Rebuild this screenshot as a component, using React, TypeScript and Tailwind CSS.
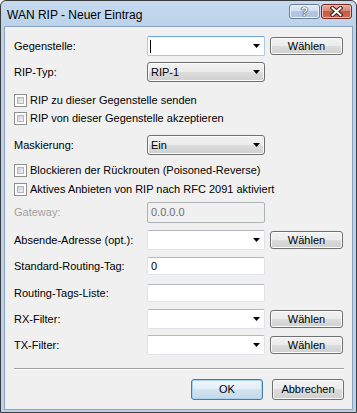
import React from "react";

const font = "font-['Liberation_Sans',Arial,sans-serif]";

function Arrow() {
  return (
    <svg width="7" height="4" viewBox="0 0 7 4" className="shrink-0">
      <polygon points="0,0 7,0 3.5,4" fill="#000" />
    </svg>
  );
}

function Label({ children, disabled }: { children: React.ReactNode; disabled?: boolean }) {
  return (
    <div className={`w-[133px] shrink-0 ${disabled ? "text-[#a0a0a0]" : "text-black"}`}>
      {children}
    </div>
  );
}

function Combo({ focused, caret }: { focused?: boolean; caret?: boolean }) {
  return (
    <div
      className={`w-[118px] h-[20px] flex items-center justify-between pl-[2px] pr-[4px] bg-white rounded-[2px] border ${
        focused
          ? "border-[#a9c9ec] border-t-[#6aa5e3]"
          : "border-[#e0e3e9] border-t-[#b4b7be]"
      }`}
    >
      <span className="w-px h-[13px] bg-black" style={{ opacity: caret ? 1 : 0 }} />
      <Arrow />
    </div>
  );
}

function Dropdown({ value }: { value: string }) {
  return (
    <div className="w-[118px] h-[20px] flex items-center justify-between pl-[3px] pr-[4px] rounded-[3px] border border-[#707070] bg-[linear-gradient(to_bottom,#f2f2f2_0%,#ebebeb_50%,#dddddd_50%,#cfcfcf_100%)] shadow-[inset_0_0_0_1px_#fbfbfb]">
      <span>{value}</span>
      <Arrow />
    </div>
  );
}

function TextBox({ value, h = "h-[18px]", disabled }: { value?: string; h?: string; disabled?: boolean }) {
  return (
    <div
      className={`w-[118px] ${h} flex items-center pl-[3px] rounded-[2px] border ${
        disabled
          ? "bg-[#f0f0f0] border-[#adb2b5] text-[#6d6d6d]"
          : "bg-white border-[#e0e3e9] border-t-[#b4b7be] text-black"
      }`}
    >
      {value}
    </div>
  );
}

function WinButton({ children, w = "w-[73px]", h = "h-[18px]", isDefault }: { children: React.ReactNode; w?: string; h?: string; isDefault?: boolean }) {
  return (
    <div
      className={`${w} ${h} flex items-center justify-center rounded-[3px] border ${
        isDefault
          ? "border-[#3c7fb1] bg-[linear-gradient(to_bottom,#eef5fa_0%,#e3eef6_50%,#d3e3ef_50%,#c6d9e8_100%)] shadow-[inset_0_0_0_1px_#a8d4f0]"
          : "border-[#707070] bg-[linear-gradient(to_bottom,#f2f2f2_0%,#ebebeb_50%,#dddddd_50%,#cfcfcf_100%)] shadow-[inset_0_0_0_1px_#fbfbfb]"
      }`}
    >
      {children}
    </div>
  );
}

function CheckRow({ label, mt }: { label: string; mt: string }) {
  return (
    <div className={`${mt} h-[16px] flex items-center gap-[3px]`}>
      <div className="w-[13px] h-[13px] border border-[#8e8f8f] bg-white p-[2px]">
        <div className="w-full h-full border border-[#b4b8bd] bg-[linear-gradient(135deg,#cbcfd5,#f4f4f4)]" />
      </div>
      <span>{label}</span>
    </div>
  );
}

export default function App() {
  return (
    <div className={`${font} text-[11px] leading-none w-[357px] h-[413px] flex flex-col border border-[#3c3c3c] rounded-t-[6px] bg-[linear-gradient(to_bottom,#c6daf0,#b9d1ea_30px,#b9d1ea)] overflow-hidden`}>
      {/* title bar */}
      <div className="h-[25px] shrink-0 flex items-start">
        <div className="pl-[6px] pt-[8px] text-[12px] text-black">WAN RIP - Neuer Eintrag</div>
        <div className="ml-auto mt-[3px] mr-[4px] flex gap-[1px]">
          <div className="w-[31px] h-[15px] rounded-[3px] border border-[#6b7f99] bg-[linear-gradient(to_bottom,#e3edf8_0%,#cddcee_50%,#b3c8e1_50%,#a9c1de_100%)] flex items-center justify-center shadow-[inset_0_0_0_1px_#eef4fb]">
            <span className="text-[12px] font-bold text-[#f4f7fb] [text-shadow:0_0_1px_#2d3f57,0_0_1px_#2d3f57,0_0_1px_#2d3f57]">?</span>
          </div>
          <div className="w-[31px] h-[15px] rounded-[3px] border border-[#7a2a20] bg-[linear-gradient(to_bottom,#e9a99c_0%,#d98471_50%,#c75a42_50%,#cd6a50_100%)] flex items-center justify-center shadow-[inset_0_0_0_1px_#eebcb0]">
            <svg width="13" height="11" viewBox="0 0 13 11">
              <path d="M2.5 2 L10.5 9 M10.5 2 L2.5 9" stroke="#3b1a14" strokeWidth="4" strokeLinecap="square" />
              <path d="M2.5 2 L10.5 9 M10.5 2 L2.5 9" stroke="#ffffff" strokeWidth="2" strokeLinecap="square" />
            </svg>
          </div>
        </div>
      </div>

      {/* content */}
      <div className="flex-1 mx-[3px] mb-[2px] border border-[#8aa3c0] bg-[#f0f0f0] pl-[9px] pr-[8px] flex flex-col">
        <div className="mt-[9px] h-[20px] flex items-center">
          <Label>Gegenstelle:</Label>
          <Combo focused caret />
          <div className="ml-[5px]"><WinButton>Wählen</WinButton></div>
        </div>
        <div className="mt-[6px] h-[20px] flex items-center">
          <Label>RIP-Typ:</Label>
          <Dropdown value="RIP-1" />
        </div>
        <CheckRow mt="mt-[10px]" label="RIP zu dieser Gegenstelle senden" />
        <CheckRow mt="mt-[2px]" label="RIP von dieser Gegenstelle akzeptieren" />
        <div className="mt-[9px] h-[20px] flex items-center">
          <Label>Maskierung:</Label>
          <Dropdown value="Ein" />
        </div>
        <CheckRow mt="mt-[7px]" label="Blockieren der Rückrouten (Poisoned-Reverse)" />
        <CheckRow mt="mt-[3px]" label="Aktives Anbieten von RIP nach RFC 2091 aktiviert" />
        <div className="mt-[5px] h-[21px] flex items-center">
          <Label disabled>Gateway:</Label>
          <TextBox value="0.0.0.0" h="h-[21px]" disabled />
        </div>
        <div className="mt-[7px] h-[20px] flex items-center">
          <Label>Absende-Adresse (opt.):</Label>
          <Combo />
          <div className="ml-[5px]"><WinButton>Wählen</WinButton></div>
        </div>
        <div className="mt-[6px] h-[20px] flex items-center">
          <Label>Standard-Routing-Tag:</Label>
          <TextBox value="0" />
        </div>
        <div className="mt-[7px] h-[20px] flex items-center">
          <Label>Routing-Tags-Liste:</Label>
          <TextBox />
        </div>
        <div className="mt-[6px] h-[20px] flex items-center">
          <Label>RX-Filter:</Label>
          <Combo />
          <div className="ml-[5px]"><WinButton>Wählen</WinButton></div>
        </div>
        <div className="mt-[6px] h-[20px] flex items-center">
          <Label>TX-Filter:</Label>
          <Combo />
          <div className="ml-[5px]"><WinButton>Wählen</WinButton></div>
        </div>
        <div className="mt-[13px] mr-[0px] border-t border-t-[#a0a0a0] border-b border-b-white" />
        <div className="mt-[9px] flex justify-end gap-[9px]">
          <WinButton w="w-[72px]" h="h-[21px]" isDefault>OK</WinButton>
          <WinButton w="w-[72px]" h="h-[21px]">Abbrechen</WinButton>
        </div>
      </div>
    </div>
  );
}
